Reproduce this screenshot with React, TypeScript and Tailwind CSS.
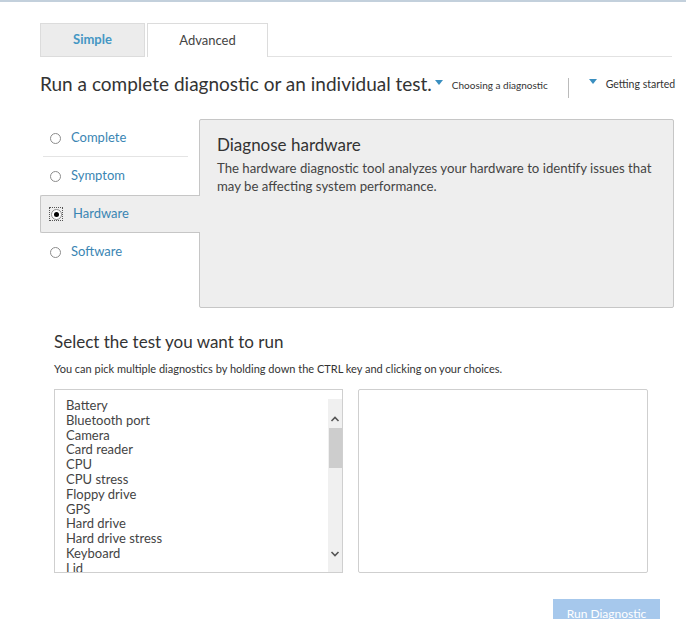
import { useState } from 'react';

const font = { fontFamily: 'Lato, "Liberation Sans", sans-serif' };

const modes = ['Complete', 'Symptom', 'Hardware', 'Software'];

const tests = [
  'Battery',
  'Bluetooth port',
  'Camera',
  'Card reader',
  'CPU',
  'CPU stress',
  'Floppy drive',
  'GPS',
  'Hard drive',
  'Hard drive stress',
  'Keyboard',
  'Lid',
];

function Radio({ checked }: { checked: boolean }) {
  return (
    <span
      className={`flex h-[12px] w-[12px] shrink-0 items-center justify-center ${checked ? 'outline outline-1 outline-dotted outline-[#555]' : ''}`}
    >
      <span className="flex h-[11px] w-[11px] items-center justify-center rounded-full border border-[#8c8c8c] bg-white">
        {checked && <span className="h-[5px] w-[5px] rounded-full bg-black" />}
      </span>
    </span>
  );
}

export default function App() {
  const [mode, setMode] = useState('Hardware');

  return (
    <div className="h-[619px] w-[686px] overflow-hidden border-t-2 border-[#c3d0dc] bg-white" style={font}>
      <div className="pl-[40px]">
        {/* tabs */}
        <div className="mt-[21px] flex w-[632px] items-end">
          <div className="flex h-[34px] w-[105px] items-center justify-center border border-[#dcdcdc] bg-[#ececec] text-[13px] font-bold text-[#4597c4]">
            Simple
          </div>
          <div className="ml-[2px] flex h-[34px] w-[121px] items-center justify-center border border-b-0 border-[#dcdcdc] bg-white text-[13px] text-[#444]">
            Advanced
          </div>
          <div className="flex-1 border-b border-[#e2e2e2]" />
        </div>

        {/* heading */}
        <div className="mt-[13px] flex items-center whitespace-nowrap">
          <h1 className="text-[19px] leading-[26px] text-[#333]">Run a complete diagnostic or an individual test.</h1>
          <span className="ml-[3px] mb-[4px] h-0 w-0 border-x-[4px] border-t-[5px] border-x-transparent border-t-[#3a8fc0]" />
          <span className="ml-[9px] mt-[3px] text-[10px] text-[#333]">Choosing a diagnostic</span>
          <span className="ml-[20px] mt-[8px] h-[20px] w-px bg-[#bbb]" />
          <span className="ml-[20px] mb-[6px] h-0 w-0 border-x-[4px] border-t-[5px] border-x-transparent border-t-[#3a8fc0]" />
          <span className="ml-[9px] mt-[1px] text-[10.5px] text-[#333]">Getting started</span>
        </div>

        {/* mode + description */}
        <div className="mt-[21px] flex">
          <div className="w-[159px]">
            {modes.map((m, i) => {
              const active = m === mode;
              return (
                <div
                  key={m}
                  onClick={() => setMode(m)}
                  className={`relative z-10 flex h-[38px] cursor-pointer items-center gap-[10px] pl-[9px] ${
                    active ? '-mr-px rounded-l-[2px] border border-r-0 border-[#c6c6c6] bg-[#eeeeee]' : ''
                  }`}
                >
                  <Radio checked={active} />
                  <span className={`text-[13px] text-[#3a85b3] ${active ? 'ml-px' : ''}`}>{m}</span>
                  {i === 0 && <span className="absolute bottom-0 left-[3px] h-px w-[145px] bg-[#e4e4e4]" />}
                </div>
              );
            })}
          </div>
          <div className="h-[189px] w-[475px] rounded-[2px] border border-[#c6c6c6] bg-[#eeeeee] pl-[17px] pr-[10px] pt-[14px]">
            <h2 className="text-[17px] leading-[22px] text-[#333]">Diagnose hardware</h2>
            <p className="mt-[3px] text-[13.2px] leading-[18px] text-[#444]">
              The hardware diagnostic tool analyzes your hardware to identify issues that may be affecting system performance.
            </p>
          </div>
        </div>

        {/* test selection */}
        <div className="pl-[14px]">
          <h2 className="mt-[23px] text-[17px] leading-[22px] text-[#333]">Select the test you want to run</h2>
          <p className="mt-[9px] text-[11px] leading-[14px] text-[#333]">
            You can pick multiple diagnostics by holding down the CTRL key and clicking on your choices.
          </p>
          <div className="mt-[13px] flex gap-[15px]">
            <div className="flex h-[184px] w-[289px] overflow-hidden border border-[#cfcfcf] bg-white">
              <ul className="flex-1 pl-[11px] pt-[8px] text-[13px] leading-[14.8px] text-[#444]">
                {tests.map((t) => (
                  <li key={t}>{t}</li>
                ))}
              </ul>
              <div className="mt-[9px] flex w-[14px] flex-col items-center bg-[#f0f0f0]">
                <svg width="10" height="8" viewBox="0 0 10 8" className="mt-[16px]">
                  <path d="M1.5 6 L5 2.5 L8.5 6" fill="none" stroke="#555" strokeWidth="1.6" />
                </svg>
                <div className="mt-[5px] h-[40px] w-[13px] bg-[#cdcdcd]" />
                <div className="flex-1" />
                <svg width="10" height="8" viewBox="0 0 10 8" className="mb-[14px]">
                  <path d="M1.5 2 L5 5.5 L8.5 2" fill="none" stroke="#555" strokeWidth="1.6" />
                </svg>
              </div>
            </div>
            <div className="h-[184px] w-[290px] rounded-[2px] border border-[#cfcfcf] bg-white" />
          </div>
          <div className="mt-[26px] flex w-[606px] justify-end">
            <button className="h-[28px] w-[107px] bg-[#a6c8ec] pt-[2px] text-[12px] text-white">Run Diagnostic</button>
          </div>
        </div>
      </div>
    </div>
  );
}
